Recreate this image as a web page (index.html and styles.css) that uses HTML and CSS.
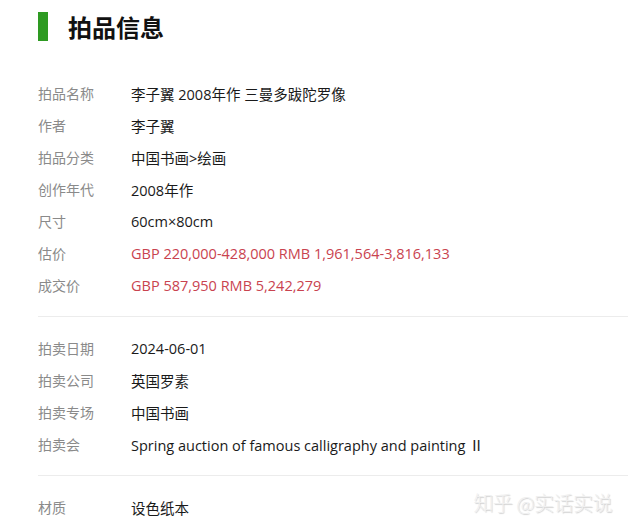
FILE: index.html
```html
<!DOCTYPE html>
<html lang="zh-CN">
<head>
    <meta charset="UTF-8">
    <title>拍品信息</title>
    <link rel="stylesheet" href="styles.css">
</head>
<body>
    <div class="container">
        <h1 class="title">拍品信息</h1>

        <div class="section">
            <div class="row"><span class="label">拍品名称</span><span class="value">李子翼 2008年作 三曼多跋陀罗像</span></div>
            <div class="row"><span class="label">作者</span><span class="value">李子翼</span></div>
            <div class="row"><span class="label">拍品分类</span><span class="value">中国书画&gt;绘画</span></div>
            <div class="row"><span class="label">创作年代</span><span class="value">2008年作</span></div>
            <div class="row"><span class="label">尺寸</span><span class="value">60cm×80cm</span></div>
            <div class="row"><span class="label">估价</span><span class="value price">GBP 220,000-428,000 RMB 1,961,564-3,816,133</span></div>
            <div class="row"><span class="label">成交价</span><span class="value price">GBP 587,950 RMB 5,242,279</span></div>
        </div>

        <div class="section">
            <div class="row"><span class="label">拍卖日期</span><span class="value">2024-06-01</span></div>
            <div class="row"><span class="label">拍卖公司</span><span class="value">英国罗素</span></div>
            <div class="row"><span class="label">拍卖专场</span><span class="value">中国书画</span></div>
            <div class="row"><span class="label">拍卖会</span><span class="value">Spring auction of famous calligraphy and painting Ⅱ</span></div>
        </div>

        <div class="section last">
            <div class="row"><span class="label">材质</span><span class="value">设色纸本</span></div>
        </div>
    </div>
    <div class="watermark">知乎 @实话实说</div>
</body>
</html>
```

FILE: styles.css
```css
body {
    margin: 0;
    background: #fff;
    font-family: "Open Sans", "Noto Sans CJK SC", sans-serif;
    font-size: 14px;
    color: #222;
    height: 528px;
    overflow: hidden;
    position: relative;
}
.container {
    padding: 12px 0 0 38px;
}
.title {
    margin: 0;
    height: 29px;
    line-height: 29px;
    border-left: 10px solid #2e9a22;
    padding-left: 20px;
    font-size: 24px;
    font-weight: bold;
    color: #111;
    font-family: "Noto Sans CJK SC", sans-serif;
}
.section {
    padding: 15px 0 15px;
    border-bottom: 1px solid #ececec;
}
.section:first-of-type {
    padding-top: 36px;
}
.section.last {
    border-bottom: none;
}
.row {
    display: flex;
    height: 32px;
    align-items: center;
}
.label {
    width: 93px;
    flex-shrink: 0;
    color: #8a8a8a;
}
.value {
    font-size: 14.5px;
    color: #1a1a1a;
}
.value.price {
    color: #c9434f;
}
.watermark {
    position: absolute;
    right: 16px;
    top: 488px;
    font-size: 20px;
    font-weight: 300;
    letter-spacing: -0.5px;
    color: #f0f0f0;
    text-shadow: 1px 1px 1px rgba(0, 0, 0, 0.18);
    font-family: "Noto Sans CJK SC", sans-serif;
}
```
